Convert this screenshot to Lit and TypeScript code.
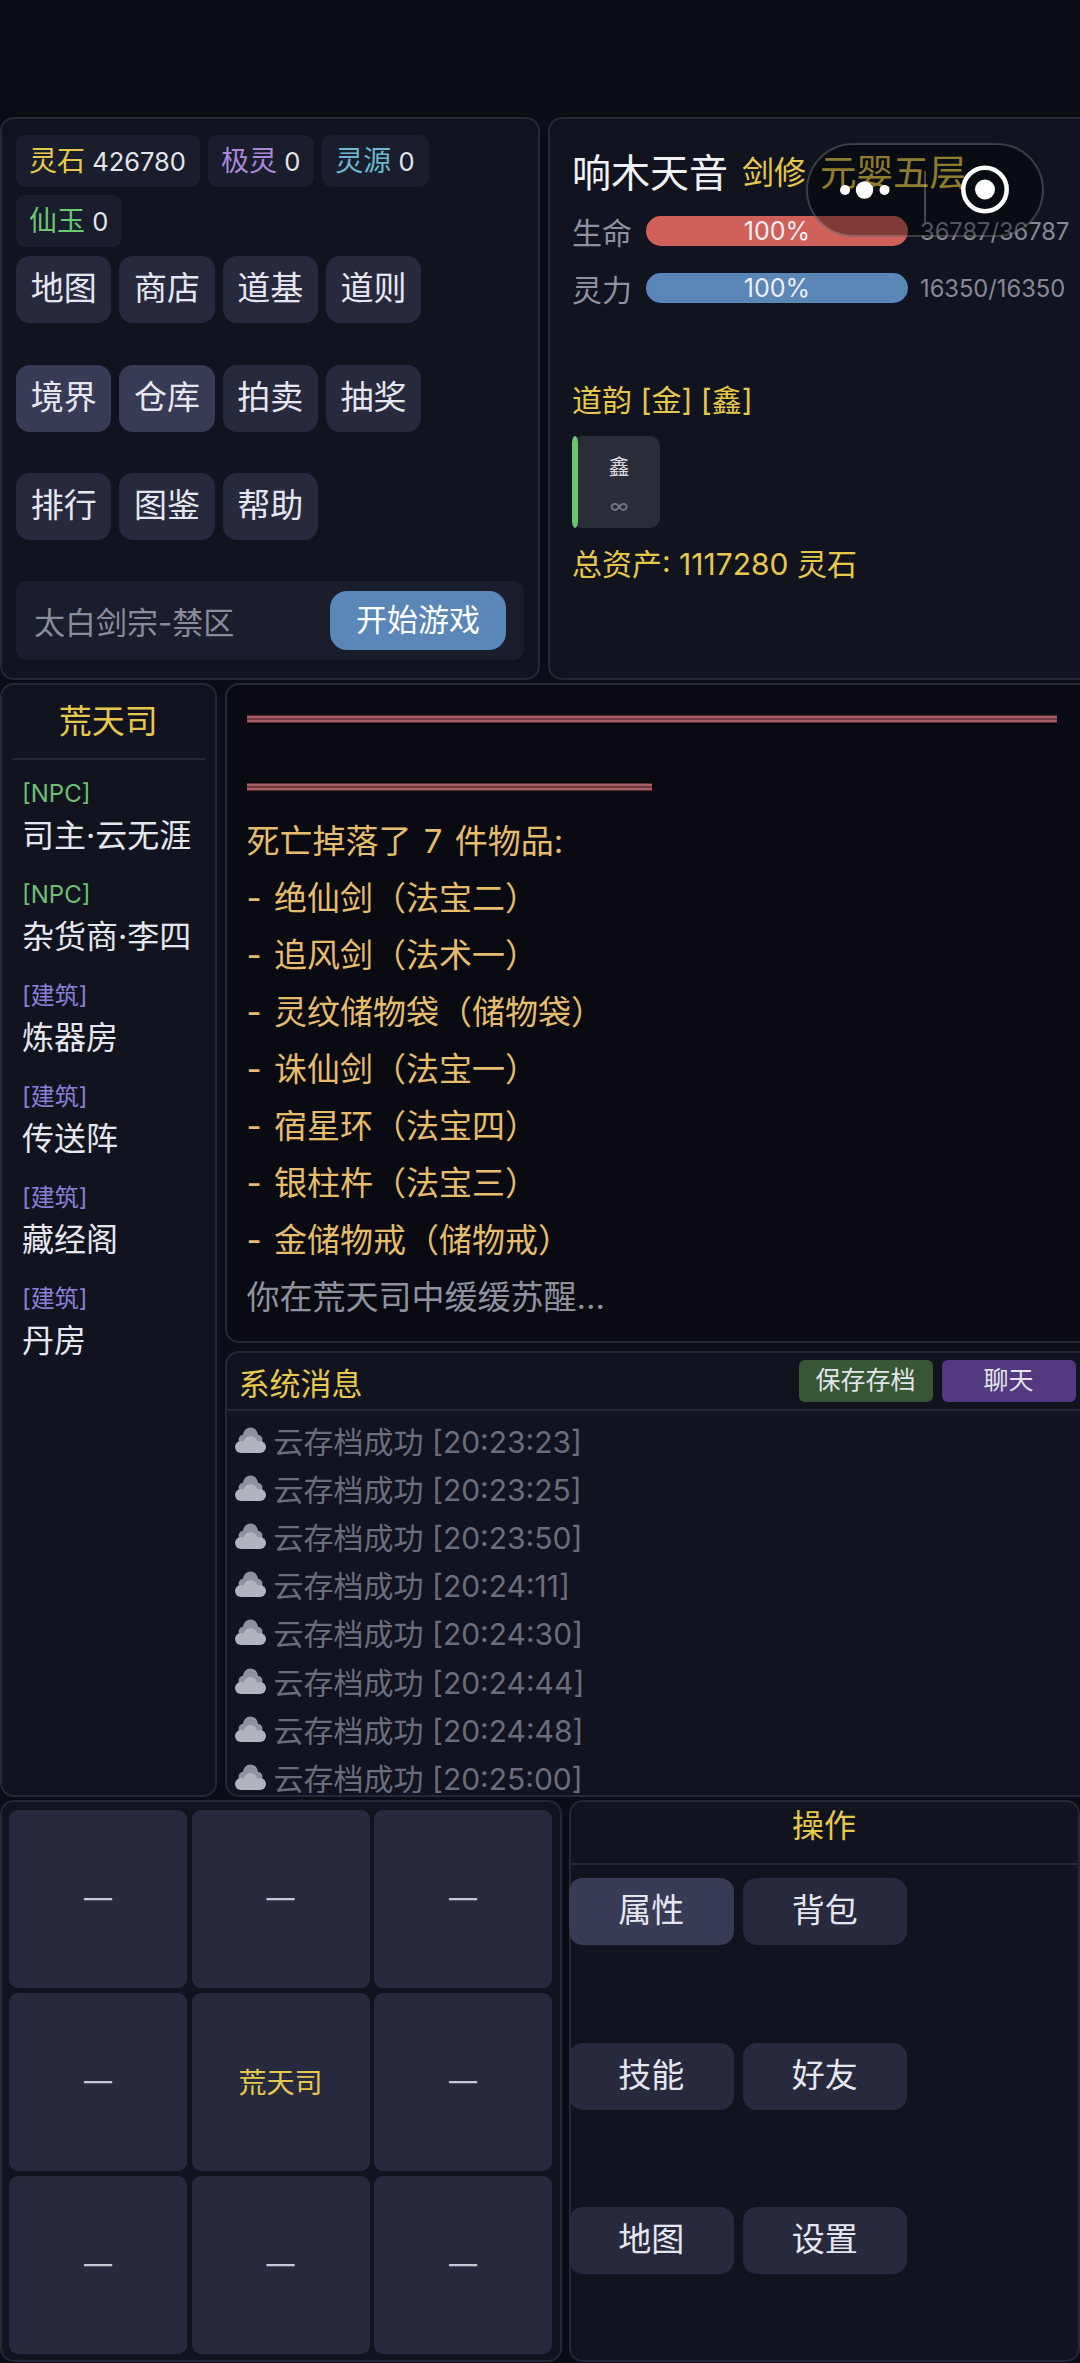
import { LitElement, html, css } from 'lit';
import { customElement } from 'lit/decorators.js';

const cloud = html`<svg class="cloud" viewBox="0 0 31 26" aria-hidden="true">
  <g fill="#8f929d">
    <circle cx="15.5" cy="8" r="7.5" />
    <circle cx="9" cy="13" r="5.5" />
    <circle cx="22" cy="13" r="5.5" />
  </g>
  <g fill="#b1b3bd">
    <circle cx="6" cy="20" r="6" />
    <circle cx="25" cy="20" r="6" />
    <circle cx="15.5" cy="16" r="7" />
    <rect x="6" y="17" width="19" height="9" />
  </g>
</svg>`;

const topButtons = ['地图', '商店', '道基', '道则', '境界', '仓库', '拍卖', '抽奖', '排行', '图鉴', '帮助'];
const activeTop = ['境界', '仓库'];

const places = [
  { tag: '[NPC]', kind: 'npc', name: '司主·云无涯' },
  { tag: '[NPC]', kind: 'npc', name: '杂货商·李四' },
  { tag: '[建筑]', kind: 'building', name: '炼器房' },
  { tag: '[建筑]', kind: 'building', name: '传送阵' },
  { tag: '[建筑]', kind: 'building', name: '藏经阁' },
  { tag: '[建筑]', kind: 'building', name: '丹房' },
];

const drops = ['绝仙剑（法宝二）', '追风剑（法术一）', '灵纹储物袋（储物袋）', '诛仙剑（法宝一）', '宿星环（法宝四）', '银柱杵（法宝三）', '金储物戒（储物戒）'];
const saves = ['20:23:23', '20:23:25', '20:23:50', '20:24:11', '20:24:30', '20:24:44', '20:24:48', '20:25:00'];
const actions = ['属性', '背包', '技能', '好友', '地图', '设置'];

@customElement('app-root')
export class AppRoot extends LitElement {
  static styles = css`
    :host {
      display: block;
      position: relative;
      width: 1080px;
      height: 2363px;
      overflow: hidden;
      background: #0b0d15;
      color: #e6e7ee;
      font-family: Inter, 'Noto Sans CJK SC', sans-serif;
    }

    .page {
      width: 1096px;
      padding-top: 117px;
      display: flex;
      flex-direction: column;
      gap: 3px;
    }

    .row {
      display: flex;
      gap: 8px;
    }

    .panel {
      box-sizing: border-box;
      background: #11141f;
      border: 2px solid #252837;
      border-radius: 14px;
      flex: none;
    }

    .yellow { color: #e6c84c; }

    /* top left */
    .top-row { height: 563px; }

    .res {
      width: 540px;
      padding: 16px 14px 0;
    }

    .chips {
      display: flex;
      flex-wrap: wrap;
      gap: 8px;
      height: 112px;
      align-content: flex-start;
    }

    .chip {
      height: 52px;
      box-sizing: border-box;
      padding: 0 14px 0 13px;
      background: #1a1d2b;
      border-radius: 9px;
      font-size: 25.5px;
      line-height: 52px;
      color: #e4e5ec;
      white-space: nowrap;
    }

    .chip span { font-size: 28px; }
    .chip .gold { color: #e6c84c; }
    .chip .violet { color: #a986dc; }
    .chip .sky { color: #6db7d3; }
    .chip .green { color: #6cc973; }

    .nav {
      display: flex;
      flex-wrap: wrap;
      gap: 41.5px 8px;
      width: 420px;
      margin-top: 9px;
    }

    .btn {
      box-sizing: border-box;
      width: 95.3px;
      height: 67px;
      background: #272a3d;
      border-radius: 14px;
      font-size: 33px;
      line-height: 65px;
      text-align: center;
      color: #e6e7ee;
    }

    .btn.active { background: #383b55; }

    .start {
      box-sizing: border-box;
      display: flex;
      align-items: center;
      justify-content: space-between;
      width: 508px;
      height: 79px;
      margin-top: 41px;
      padding: 0 18px;
      background: #1a1d2b;
      border-radius: 10px;
      font-size: 31px;
      color: #8a8d99;
    }

    .start-btn {
      width: 176px;
      height: 59px;
      background: #5b86b8;
      border-radius: 17px;
      font-size: 31px;
      line-height: 57px;
      text-align: center;
      color: #fff;
    }

    /* top right */
    .hero {
      width: 548px;
      padding: 26px 22px 0;
    }

    .hero-head {
      display: flex;
      align-items: center;
      height: 50px;
      white-space: nowrap;
    }

    .hero-name { font-size: 39px; color: #f0f1f5; }
    .hero-class { font-size: 32px; margin-left: 14px; }
    .hero-rank { font-size: 36.5px; margin-left: 14px; }

    .stat {
      display: flex;
      align-items: center;
      height: 30px;
      margin-top: 27px;
      white-space: nowrap;
    }

    .stat.first { margin-top: 21px; }

    .stat-label {
      flex: none;
      width: 74px;
      font-size: 30px;
      color: #8f929e;
    }

    .bar {
      flex: none;
      width: 262px;
      height: 30px;
      border-radius: 15px;
      font-size: 25px;
      line-height: 30px;
      text-align: center;
      color: #eef0f6;
    }

    .bar.hp { background: #d0605a; }
    .bar.mp { background: #5b86b8; }

    .stat-value {
      margin-left: 12px;
      font-size: 23.7px;
      color: #868995;
    }

    .dao {
      margin-top: 77px;
      font-size: 30px;
      line-height: 40px;
    }

    .dao-card {
      position: relative;
      box-sizing: border-box;
      display: flex;
      flex-direction: column;
      align-items: center;
      width: 88px;
      height: 92px;
      margin-top: 16px;
      padding: 16px 0 0 6px;
      background: #2a2c38;
      border-radius: 10px;
    }

    .dao-card::before {
      content: '';
      position: absolute;
      left: 0;
      top: 0;
      bottom: 0;
      width: 6px;
      border-radius: 50% / 8%;
      background: #6bc573;
    }

    .dao-glyph { font-size: 21px; line-height: 30px; color: #dcdde4; }
    .dao-count { font-size: 20px; line-height: 24px; margin-top: 12px; color: #777a86; }

    .assets {
      margin-top: 16px;
      font-size: 30px;
      line-height: 40px;
    }

    /* middle */
    .mid-row { height: 1114px; }

    .scene {
      width: 216.5px;
      padding: 0 10px;
    }

    .scene-title {
      height: 73px;
      border-bottom: 2px solid #252837;
      font-size: 33px;
      line-height: 73px;
      text-align: center;
    }

    .place {
      display: flex;
      flex-direction: column;
      margin-left: 10px;
      height: 101px;
      white-space: nowrap;
    }

    .places { padding-top: 16px; }

    .place-tag { font-size: 24px; line-height: 36px; }
    .place-tag.npc { color: #6fbf73; }
    .place-tag.building { color: #8a7fd6; }
    .place-name { font-size: 32px; line-height: 48px; color: #e6e7ee; }

    .col {
      display: flex;
      flex-direction: column;
      gap: 8px;
      flex: none;
      width: 872px;
    }

    .log {
      height: 660px;
      padding: 30px 20px 0;
      background: #0a0b12;
      font-size: 33px;
      line-height: 57px;
      color: #e5bd6c;
    }

    .rule {
      height: 8px;
      background: linear-gradient(
        #5a2a30 0 1px,
        #a85f65 1px 3px,
        #74393f 3px 5px,
        #a85f65 5px 7px,
        #5a2a30 7px
      );
    }

    .rule.long { width: 810px; }
    .rule.short { width: 405px; margin-top: 60px; margin-bottom: 22px; }

    .log-line { white-space: nowrap; word-spacing: 3px; }
    .log-line.muted { color: #8f929e; }

    .sys {
      height: 446px;
      overflow: hidden;
    }

    .sys-head {
      display: flex;
      align-items: center;
      height: 56px;
      padding: 0 12px;
      border-bottom: 2px solid #252837;
      font-size: 31px;
    }

    .sys-title {
      flex: none;
      width: 560px;
    }

    .tool {
      flex: none;
      width: 134px;
      height: 42px;
      margin-right: 9px;
      border-radius: 6px;
      font-size: 25px;
      line-height: 40px;
      text-align: center;
      color: #e2e4ea;
    }

    .tool.save { background: #375636; }
    .tool.chat { background: #53397f; }

    .msgs { padding: 4.5px 0 0 8px; }

    .msg {
      display: flex;
      align-items: center;
      height: 48.2px;
      font-size: 30px;
      color: #6a6d7a;
      white-space: nowrap;
    }

    .cloud {
      width: 31px;
      height: 26px;
      margin-right: 8px;
      flex: none;
    }

    /* bottom */
    .bot-row {
      height: 562px;
      gap: 6.5px;
    }

    .map {
      display: grid;
      grid-template-columns: repeat(3, 178px);
      grid-auto-rows: 178px;
      gap: 5px 4.5px;
      width: 562px;
      padding: 8px 7px;
    }

    .cell {
      display: flex;
      align-items: center;
      justify-content: center;
      padding-bottom: 3px;
      background: #272a3d;
      border-radius: 9px;
      font-size: 28px;
      color: #c8c9d8;
    }

    .cell.here { color: #e6c84c; }

    .ops {
      width: 511px;
    }

    .ops-title {
      height: 61px;
      border-bottom: 2px solid #252837;
      font-size: 32px;
      line-height: 48px;
      text-align: center;
    }

    .ops-grid {
      display: grid;
      grid-template-columns: repeat(2, 164.5px);
      grid-auto-rows: 67px;
      gap: 97.5px 9px;
      margin: 13px 0 0 -1.5px;
    }

    .ops-grid .btn { width: 164.5px; }

    /* the host app's menu capsule, laid over the page */
    .capsule {
      position: absolute;
      left: 806px;
      top: 143px;
      width: 238px;
      height: 94px;
      box-sizing: border-box;
      border: 2px solid rgba(255, 255, 255, 0.2);
      border-radius: 47px;
      background: rgba(0, 0, 0, 0.38);
    }

    .capsule svg {
      position: absolute;
      left: -2px;
      top: -2px;
    }
  `;

  render() {
    return html`
      <div class="page">
        <div class="row top-row">
          <section class="panel res">
            <div class="chips">
              <div class="chip"><span class="gold">灵石</span> 426780</div>
              <div class="chip"><span class="violet">极灵</span> 0</div>
              <div class="chip"><span class="sky">灵源</span> 0</div>
              <div class="chip"><span class="green">仙玉</span> 0</div>
            </div>
            <div class="nav">
              ${topButtons.map(
                (b) => html`<div class="btn ${activeTop.includes(b) ? 'active' : ''}">${b}</div>`
              )}
            </div>
            <div class="start">
              <span>太白剑宗-禁区</span>
              <div class="start-btn">开始游戏</div>
            </div>
          </section>

          <section class="panel hero">
            <div class="hero-head">
              <span class="hero-name">响木天音</span>
              <span class="hero-class yellow">剑修</span>
              <span class="hero-rank yellow">元婴五层</span>
            </div>
            <div class="stat first">
              <span class="stat-label">生命</span>
              <div class="bar hp">100%</div>
              <span class="stat-value">36787/36787</span>
            </div>
            <div class="stat">
              <span class="stat-label">灵力</span>
              <div class="bar mp">100%</div>
              <span class="stat-value">16350/16350</span>
            </div>
            <div class="dao yellow">道韵 [金] [鑫]</div>
            <div class="dao-card">
              <span class="dao-glyph">鑫</span>
              <span class="dao-count">∞</span>
            </div>
            <div class="assets yellow">总资产: 1117280 灵石</div>
          </section>
        </div>

        <div class="row mid-row">
          <section class="panel scene">
            <div class="scene-title yellow">荒天司</div>
            <div class="places">
              ${places.map(
                (p) => html`<div class="place">
                  <span class="place-tag ${p.kind}">${p.tag}</span>
                  <span class="place-name">${p.name}</span>
                </div>`
              )}
            </div>
          </section>

          <div class="col">
            <section class="panel log">
              <div class="rule long"></div>
              <div class="rule short"></div>
              <div class="log-line">死亡掉落了 7 件物品:</div>
              ${drops.map((d) => html`<div class="log-line">- ${d}</div>`)}
              <div class="log-line muted">你在荒天司中缓缓苏醒...</div>
            </section>

            <section class="panel sys">
              <div class="sys-head">
                <span class="sys-title yellow">系统消息</span>
                <div class="tool save">保存存档</div>
                <div class="tool chat">聊天</div>
              </div>
              <div class="msgs">
                ${saves.map((t) => html`<div class="msg">${cloud}云存档成功 [${t}]</div>`)}
              </div>
            </section>
          </div>
        </div>

        <div class="row bot-row">
          <section class="panel map">
            ${['—', '—', '—', '—', '荒天司', '—', '—', '—', '—'].map(
              (c) => html`<div class="cell ${c === '—' ? '' : 'here'}">${c}</div>`
            )}
          </section>
          <section class="panel ops">
            <div class="ops-title yellow">操作</div>
            <div class="ops-grid">
              ${actions.map((a, i) => html`<div class="btn ${i === 0 ? 'active' : ''}">${a}</div>`)}
            </div>
          </section>
        </div>
      </div>

      <div class="capsule">
        <svg width="238" height="94" viewBox="0 0 238 94" aria-hidden="true">
          <circle cx="39" cy="47" r="5" fill="#fff" />
          <circle cx="58.5" cy="47" r="8.7" fill="#fff" />
          <circle cx="78.5" cy="47" r="5" fill="#fff" />
          <line x1="119" y1="28" x2="119" y2="79" stroke="rgba(255,255,255,0.25)" stroke-width="2" />
          <circle cx="179" cy="46.5" r="21.7" fill="none" stroke="#fff" stroke-width="4.5" />
          <circle cx="179" cy="46.5" r="10" fill="#fff" />
        </svg>
      </div>
    `;
  }
}
